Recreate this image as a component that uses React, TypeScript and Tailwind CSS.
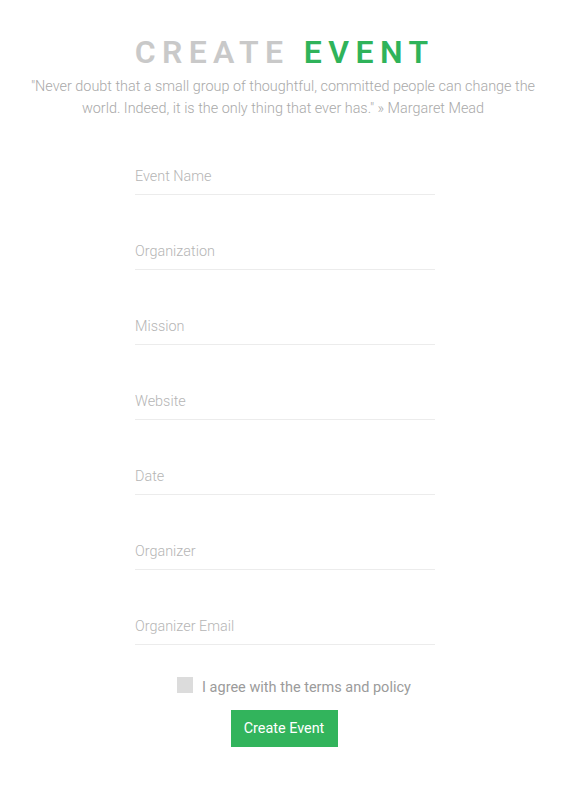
import React from "react";

const fields = [
  "Event Name",
  "Organization",
  "Mission",
  "Website",
  "Date",
  "Organizer",
  "Organizer Email",
];

export default function App() {
  return (
    <div className="min-h-[787px] w-full bg-white font-['Roboto',sans-serif]">
      <div className="flex flex-col items-center pt-[32px]">
        <h1 className="text-[32px] leading-[40px] font-semibold tracking-[0.2em] text-[#c9c9c9] pl-[0.1em]">
          CREATE <span className="text-[#2fb35a]">EVENT</span>
        </h1>
        <p className="mt-[4px] w-[520px] text-center text-[14.4px] leading-[22px] font-light text-[#a9a9a9]">
          "Never doubt that a small group of thoughtful, committed people can change the world. Indeed, it is the only thing that ever has." » Margaret Mead
        </p>
        <form className="mt-[35px] ml-[4px] flex w-[300px] flex-col gap-[35px]" onSubmit={(e) => e.preventDefault()}>
          {fields.map((f) => (
            <input
              key={f}
              type="text"
              placeholder={f}
              className="h-[40px] w-full border-b border-[#ececec] bg-transparent pt-[4px] text-[14.4px] font-light text-[#666] outline-none placeholder:text-[#b5b5b5]"
            />
          ))}
        </form>
        <label className="mt-[32px] ml-[22px] flex items-start gap-[9px]">
          <span className="h-[16px] w-[16px] bg-[#dcdcdc]"></span>
          <span className="-mt-[1px] text-[14.5px] leading-[23px] text-[#9b9b9b]">I agree with the terms and policy</span>
        </label>
        <button className="mt-[11px] ml-[2px] h-[37px] w-[107px] bg-[#32b45c] text-[14.4px] text-white">
          Create Event
        </button>
      </div>
    </div>
  );
}
